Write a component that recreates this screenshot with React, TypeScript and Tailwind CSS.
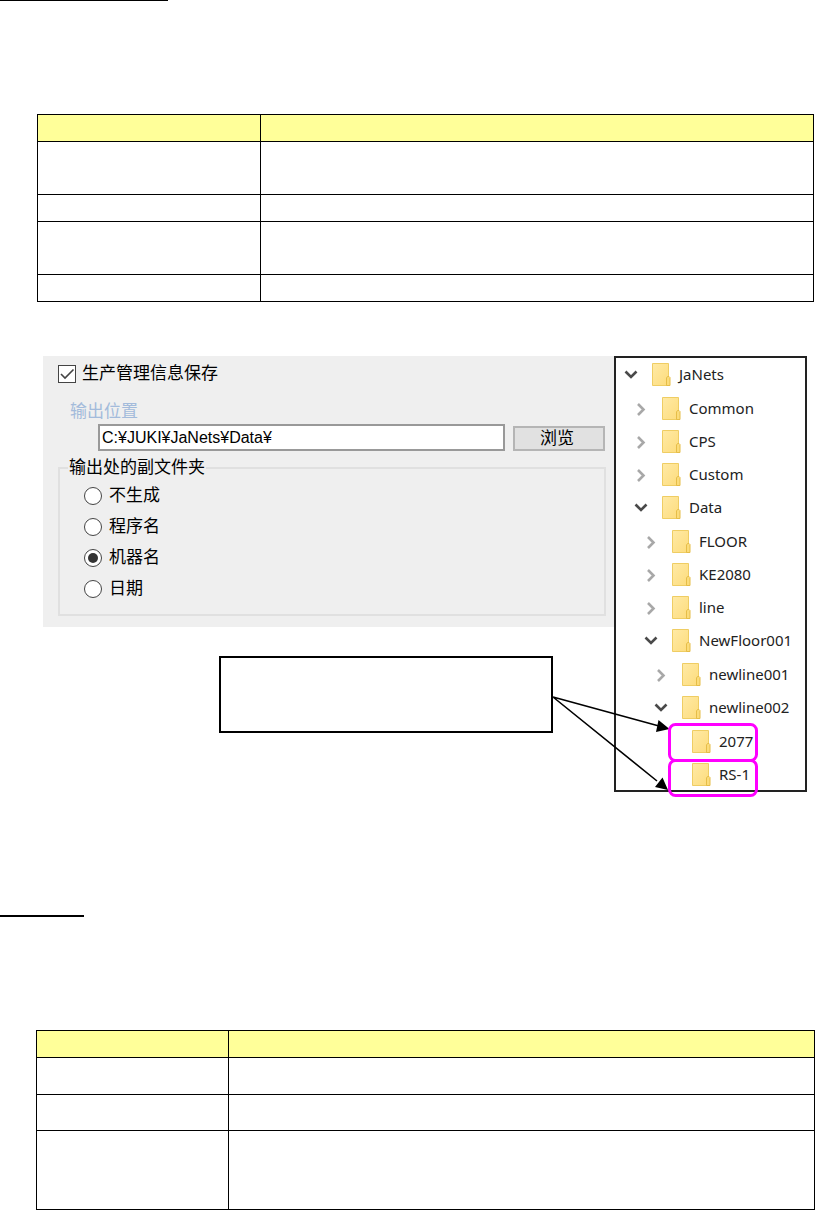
import { useState } from "react";

type Folder = {
  name: string;
  open?: boolean;
  children?: Folder[];
};

const folders: Folder[] = [
  {
    name: "JaNets",
    open: true,
    children: [
      { name: "Common", children: [] },
      { name: "CPS", children: [] },
      { name: "Custom", children: [] },
      {
        name: "Data",
        open: true,
        children: [
          { name: "FLOOR", children: [] },
          { name: "KE2080", children: [] },
          { name: "line", children: [] },
          {
            name: "NewFloor001",
            open: true,
            children: [
              { name: "newline001", children: [] },
              {
                name: "newline002",
                open: true,
                children: [{ name: "2077" }, { name: "RS-1" }],
              },
            ],
          },
        ],
      },
    ],
  },
];

const subfolderOptions = ["不生成", "程序名", "机器名", "日期"];

const Chevron = ({ open }: { open?: boolean }) => (
  <svg viewBox="0 0 14 14" className="h-[14px] w-[14px] shrink-0" fill="none">
    {open ? (
      <path d="M1.5 3.5 L7 9 L12.500 3.5" stroke="#4a4a4a" strokeWidth="2.6" />
    ) : (
      <path d="M4 2 L9.500 7.500 L4 13" stroke="#a8a8a8" strokeWidth="2.6" />
    )}
  </svg>
);

const FolderIcon = () => (
  <svg viewBox="0 0 19 23" className="h-[23px] w-[19px] shrink-0">
    <defs>
      <linearGradient id="folder" x1="0" y1="0" x2="1" y2="1">
        <stop offset="0" stopColor="#ffeaa6" />
        <stop offset="1" stopColor="#fddc7c" />
      </linearGradient>
    </defs>
    <path d="M0.5 0.5 H16.5 V22.5 H0.5 Z" fill="url(#folder)" stroke="#efcd63" />
    <path d="M14.500 22.5 V15 L15.500 13.5 H17 L18 14.5 V22.5 Z" fill="#fbdc7b" stroke="#e6bd48" />
  </svg>
);

const FolderList = ({ items, nested }: { items: Folder[]; nested?: boolean }) => (
  <ul className={nested ? "pl-[10px] pt-px" : ""}>
    {items.map((item) => (
      <li key={item.name}>
        <div className="flex h-[33px] items-center whitespace-nowrap">
          {item.children ? <Chevron open={item.open} /> : <span className="w-[14px]" />}
          <span className="ml-[14px] flex items-center gap-2">
            <FolderIcon />
            {item.name}
          </span>
        </div>
        {item.open && item.children && <FolderList items={item.children} nested />}
      </li>
    ))}
  </ul>
);

const SettingsPanel = () => {
  const [enabled, setEnabled] = useState(true);
  const [path, setPath] = useState("C:¥JUKI¥JaNets¥Data¥");
  const [selected, setSelected] = useState("机器名");

  return (
    <form className="bg-[#efefef] pb-[11px] pl-[15px] pr-2 pt-[6px] font-['Liberation_Sans','Noto_Sans_CJK_SC',sans-serif] text-[17px] leading-6 text-black">
      <label className="flex h-6 w-fit items-center gap-[6px]">
        <span className="grid">
          <input
            type="checkbox"
            checked={enabled}
            onChange={(e) => setEnabled(e.target.checked)}
            className="col-start-1 row-start-1 h-[18px] w-[18px] appearance-none border border-[#444] bg-white"
          />
          {enabled && (
            <svg viewBox="0 0 18 18" className="pointer-events-none col-start-1 row-start-1 h-[18px] w-[18px]" fill="none">
              <path d="M3 9 L7 13 L15.5 4.5" stroke="#444" strokeWidth="1.6" />
            </svg>
          )}
        </span>
        生产管理信息保存
      </label>

      <label htmlFor="output-path" className="ml-3 mt-[14px] block h-6 w-fit text-[#a3bbdb]">
        输出位置
      </label>
      <div className="flex items-end gap-2 pl-10 pr-px">
        <input
          id="output-path"
          type="text"
          value={path}
          onChange={(e) => setPath(e.target.value)}
          className="h-[27px] min-w-0 flex-1 border-2 border-[#999] bg-white px-[2px] text-base leading-5"
        />
        <button type="button" className="h-[25px] w-[92px] border-2 border-[#b5b5b5] bg-[#e1e1e1] pr-1 leading-5">
          浏览
        </button>
      </div>

      {/* Subfolder options */}
      <fieldset className="mt-[7px] border-2 border-[#e0e0e0] pb-[10px] pl-6 pt-[2px]">
        <legend className="-ml-4 h-5 px-[1px] leading-5">输出处的副文件夹</legend>
        {subfolderOptions.map((option) => (
          <label key={option} className="flex h-[31px] w-fit items-center gap-[7px]">
            <input
              type="radio"
              name="subfolder"
              checked={selected === option}
              onChange={() => setSelected(option)}
              className="grid h-[18px] w-[18px] appearance-none place-content-center rounded-full border border-[#444] bg-white before:h-[10px] before:w-[10px] before:rounded-full checked:before:bg-[#333]"
            />
            {option}
          </label>
        ))}
      </fieldset>
    </form>
  );
};

// Arrows and frames drawn over the right side of the figure
const Annotations = () => (
  <svg
    viewBox="0 0 260 445"
    className="pointer-events-none absolute right-0 top-0 h-[445px] w-[260px]"
    fill="none"
    stroke="#000"
  >
    <path d="M6 341 L112 370 M6 341 L110 425" strokeWidth="1.6" />
    <path d="M122.500 373 L109 376 L111.500 364 Z M121 434 L108 431 L115.500 421.500 Z" fill="#000" stroke="none" />
    <rect x="122.500" y="368.500" width="87" height="36" rx="6" stroke="#ff00ff" strokeWidth="3" />
    <rect x="122.500" y="404.500" width="87" height="35" rx="6" stroke="#ff00ff" strokeWidth="3" />
  </svg>
);

const App = () => {
  return (
    <main className="bg-white">
      <hr className="w-[168px] border-t border-black" />

      <div className="pl-[37px] pr-px pt-[113px]">
        <table className="w-full table-fixed border-separate border-spacing-0 border-l border-t border-black">
          <thead>
            <tr className="h-[27px] bg-[#ffff99]">
              <th className="w-[223px] border-b border-r border-black" />
              <th className="border-b border-r border-black" />
            </tr>
          </thead>
          <tbody>
            <tr className="h-[53px]">
              <td className="border-b border-r border-black" />
              <td className="border-b border-r border-black" />
            </tr>
            <tr className="h-[27px]">
              <td className="border-b border-r border-black" />
              <td className="border-b border-r border-black" />
            </tr>
            <tr className="h-[53px]">
              <td className="border-b border-r border-black" />
              <td className="border-b border-r border-black" />
            </tr>
            <tr className="h-[27px]">
              <td className="border-b border-r border-black" />
              <td className="border-b border-r border-black" />
            </tr>
          </tbody>
        </table>
      </div>

      <section className="relative ml-[43px] mr-2 mt-[54px] flex items-start">
        <div className="min-w-0 flex-1">
          <SettingsPanel />
          <div className="ml-auto mr-[61px] mt-[29px] h-[77px] w-[334px] border-2 border-black" />
        </div>
        <div className="w-[193px] shrink-0 border-2 border-[#222] pl-2 font-['Noto_Sans',sans-serif] text-[15px] text-[#222]">
          <div className="-mb-px">
            <FolderList items={folders} />
          </div>
        </div>
        <Annotations />
      </section>

      <hr className="mt-[123px] w-[84px] border-t-2 border-black" />

      <div className="pl-9 pt-[113px]">
        <table className="w-full table-fixed border-separate border-spacing-0 border-l border-t border-black">
          <thead>
            <tr className="h-[27px] bg-[#ffff99]">
              <th className="w-[192px] border-b border-r border-black" />
              <th className="border-b border-r border-black" />
            </tr>
          </thead>
          <tbody>
            <tr className="h-[37px]">
              <td className="border-b border-r border-black" />
              <td className="border-b border-r border-black" />
            </tr>
            <tr className="h-9">
              <td className="border-b border-r border-black" />
              <td className="border-b border-r border-black" />
            </tr>
            <tr className="h-[79px]">
              <td className="border-b border-r border-black" />
              <td className="border-b border-r border-black" />
            </tr>
          </tbody>
        </table>
      </div>
    </main>
  );
};

export default App;
